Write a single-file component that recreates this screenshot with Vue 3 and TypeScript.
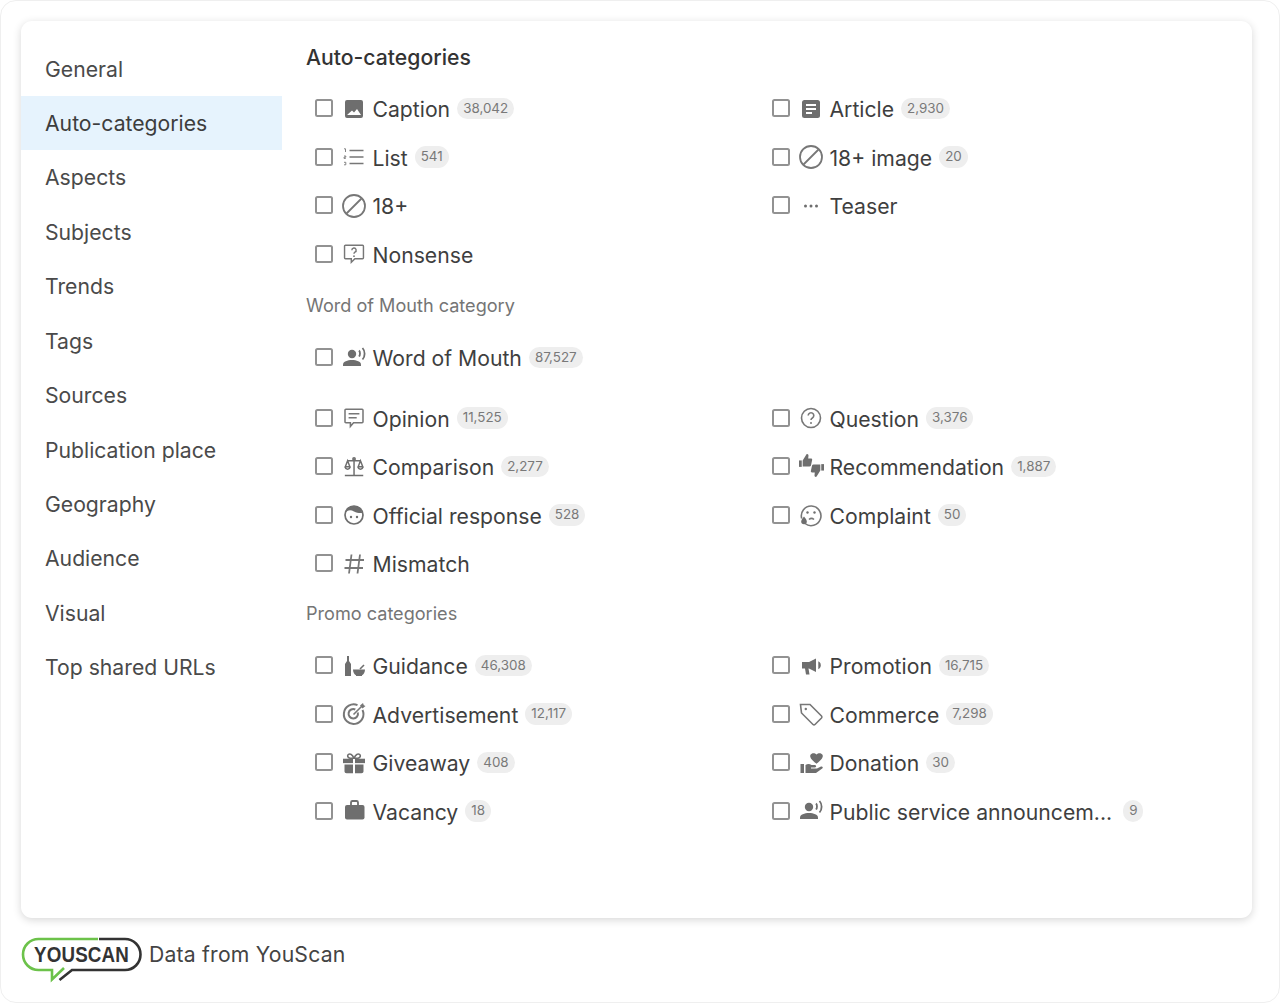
<script setup lang="ts">
interface Row {
  label: string
  count?: string
  icon: string
}

const menu: string[] = [
  'General', 'Auto-categories', 'Aspects', 'Subjects', 'Trends', 'Tags',
  'Sources', 'Publication place', 'Geography', 'Audience', 'Visual', 'Top shared URLs',
]

const autoRows: Row[] = [
  { label: 'Caption', count: '38,042', icon: 'image' },
  { label: 'Article', count: '2,930', icon: 'article' },
  { label: 'List', count: '541', icon: 'list' },
  { label: '18+ image', count: '20', icon: 'ban' },
  { label: '18+', icon: 'ban' },
  { label: 'Teaser', icon: 'dots' },
  { label: 'Nonsense', icon: 'nonsense' },
]

const womTop: Row[] = [{ label: 'Word of Mouth', count: '87,527', icon: 'speaker' }]

const womRows: Row[] = [
  { label: 'Opinion', count: '11,525', icon: 'opinion' },
  { label: 'Question', count: '3,376', icon: 'question' },
  { label: 'Comparison', count: '2,277', icon: 'scale' },
  { label: 'Recommendation', count: '1,887', icon: 'thumbs' },
  { label: 'Official response', count: '528', icon: 'official' },
  { label: 'Complaint', count: '50', icon: 'complaint' },
  { label: 'Mismatch', icon: 'hash' },
]

const promoRows: Row[] = [
  { label: 'Guidance', count: '46,308', icon: 'guidance' },
  { label: 'Promotion', count: '16,715', icon: 'megaphone' },
  { label: 'Advertisement', count: '12,117', icon: 'target' },
  { label: 'Commerce', count: '7,298', icon: 'tag' },
  { label: 'Giveaway', count: '408', icon: 'gift' },
  { label: 'Donation', count: '30', icon: 'donation' },
  { label: 'Vacancy', count: '18', icon: 'case' },
  { label: 'Public service announcem...', count: '9', icon: 'speaker' },
]

const groups: { title?: string; rows: Row[]; kind?: string }[] = [
  { rows: autoRows },
  { title: 'Word of Mouth category', rows: womTop },
  { rows: womRows, kind: 'spaced' },
  { title: 'Promo categories', rows: promoRows, kind: 'pulled' },
]
</script>

<template>
  <div class="page">
    <div class="card">
      <nav class="side">
        <div v-for="(item, i) in menu" :key="item" class="side-item" :class="{ active: i === 1 }">{{ item }}</div>
      </nav>
      <main class="content">
        <h2 class="title">Auto-categories</h2>
        <section v-for="(g, gi) in groups" :key="gi" :class="g.kind">
          <div v-if="g.title" class="group-title">{{ g.title }}</div>
          <div class="grid">
            <div v-for="r in g.rows" :key="r.label" class="row">
              <span class="check"></span>
              <svg class="ico" viewBox="0 0 24 24" width="24" height="24">
                <g v-if="r.icon === 'image'" fill="#6e6e6e">
                  <path fill-rule="evenodd" d="M5 3h14a2 2 0 0 1 2 2v14a2 2 0 0 1-2 2H5a2 2 0 0 1-2-2V5a2 2 0 0 1 2-2zm0 15h14l-4-6-3 3.500-2-2z" />
                </g>
                <g v-else-if="r.icon === 'article'">
                  <rect x="3" y="3" width="18" height="18" rx="2.500" fill="#6e6e6e" />
                  <path d="M7 8h10M7 12h10M7 16h6" stroke="#fff" stroke-width="1.800" fill="none" />
                </g>
                <g v-else-if="r.icon === 'list'" stroke="#777" fill="none">
                  <path d="M7.500 5.500h14M7.500 12h14M7.500 18.500h14" stroke-width="1.500" />
                  <path d="M2 3.800h1.500v3.200M2 11h1.800v1.200H2v1.200h1.800M2 17.300h1.800v2.500H2" stroke-width=".9" />
                </g>
                <g v-else-if="r.icon === 'ban'" stroke="#777" stroke-width="1.800" fill="none">
                  <circle cx="12" cy="12" r="11" />
                  <path d="M4.500 19.500 19.500 4.500" />
                </g>
                <g v-else-if="r.icon === 'dots'" fill="#6e6e6e">
                  <circle cx="6.500" cy="12" r="1.500" /><circle cx="12" cy="12" r="1.500" /><circle cx="17.500" cy="12" r="1.500" />
                </g>
                <g v-else-if="r.icon === 'nonsense'" fill="none" stroke="#777" stroke-width="1.600" transform="translate(1.200 1) scale(.9)">
                  <path d="M2.500 2.500h19a1 1 0 0 1 1 1v13a1 1 0 0 1-1 1h-8.500l-4 4v-4h-6.500a1 1 0 0 1-1-1v-13a1 1 0 0 1 1-1z" />
                  <path d="M9.600 8a2.400 2.400 0 1 1 3.400 2.200c-.7.400-1 .800-1 1.800" />
                  <circle cx="12" cy="14.600" r="1" fill="#777" stroke="none" />
                </g>
                <g v-else-if="r.icon === 'speaker'" fill="#6e6e6e">
                  <circle cx="10" cy="8" r="4.200" />
                  <path d="M1 20v-1.500C1 15.500 5.500 14 10 14s9 1.500 9 4.500V20z" />
                  <path d="M17 4.500c1.300 1.300 1.300 4.500 0 6M20.500 2c2.800 3 2.800 8.500 0 11.500" fill="none" stroke="#6e6e6e" stroke-width="1.800" />
                </g>
                <g v-else-if="r.icon === 'opinion'" fill="none" stroke="#777" stroke-width="1.700" transform="translate(1.200 1) scale(.9)">
                  <path d="M3 2.500h18a1 1 0 0 1 1 1v13a1 1 0 0 1-1 1h-9.500L8 21.500v-4H3a1 1 0 0 1-1-1v-13a1 1 0 0 1 1-1z" />
                  <path d="M6 7.500h12M6 12h9" />
                </g>
                <g v-else-if="r.icon === 'question'" fill="none" stroke="#777" stroke-width="1.600">
                  <circle cx="12" cy="12" r="9.500" />
                  <path d="M9.200 9.500a2.800 2.800 0 1 1 4.200 2.500c-.9.500-1.400 1-1.400 2" />
                  <circle cx="12" cy="17" r="1" fill="#777" stroke="none" />
                </g>
                <g v-else-if="r.icon === 'scale'" fill="none" stroke="#6e6e6e" stroke-width="1.600" transform="translate(1 .8) scale(.92)">
                  <path d="M12 3v18M2 21.500h20M5 5.500h14M5 5.500 2.500 12h5zM19 5.500 16.500 12h5z" />
                  <path d="M2.500 12a2.500 2.500 0 0 0 5 0M16.500 12a2.500 2.500 0 0 0 5 0" />
                  <circle cx="12" cy="3.500" r="1.300" />
                </g>
                <g v-else-if="r.icon === 'thumbs'" fill="#6e6e6e" transform="translate(0 -1)">
                  <g transform="scale(.92)">
                    <rect x="0" y="7" width="3" height="7" />
                    <path d="M4 7 8 .500c1-1 2.500 0 2.300 1.500L10 5h3c1 0 1.500.700 1.300 1.500L13 12.500c-.200.800-.800 1.200-1.600 1.200H4z" />
                  </g>
                  <g transform="rotate(180 12.500 11.500) scale(.92)">
                    <rect x="0" y="7" width="3" height="7" />
                    <path d="M4 7 8 .500c1-1 2.500 0 2.300 1.500L10 5h3c1 0 1.500.700 1.300 1.500L13 12.500c-.200.800-.800 1.200-1.600 1.200H4z" />
                  </g>
                </g>
                <g v-else-if="r.icon === 'official'" fill="none" stroke="#6e6e6e" stroke-width="1.700">
                  <circle cx="12" cy="12" r="9" />
                  <path d="M3.500 10C6 6.500 9 7 12 8.500c2.500 1.300 5.500 1.800 8.500 1.500L18 4.500 12 3 6 4.500z" fill="#6e6e6e" stroke="none" />
                  <circle cx="9" cy="14" r="1.200" fill="#6e6e6e" stroke="none" />
                  <circle cx="15" cy="14" r="1.200" fill="#6e6e6e" stroke="none" />
                </g>
                <g v-else-if="r.icon === 'complaint'" fill="none" stroke="#777" stroke-width="1.600">
                  <path d="M6 20.500a9.800 9.800 0 1 0-3.300-5" />
                  <circle cx="8.500" cy="9.500" r="1.200" fill="#6e6e6e" stroke="none" />
                  <circle cx="15.500" cy="9.500" r="1.200" fill="#6e6e6e" stroke="none" />
                  <path d="M10 16.500c1.500-1.300 3.500-1.300 5 0" />
                  <path d="M5 13.500c1.800 2.300 2.800 3.600 2.800 5a2.800 2.800 0 0 1-5.600 0c0-1.400 1-2.700 2.800-5z" fill="#6e6e6e" stroke="none" />
                </g>
                <g v-else-if="r.icon === 'hash'" fill="none" stroke="#777" stroke-width="1.800">
                  <path d="M9.500 2.500 7 21.500M18 2.500l-2.500 19M3.500 8H22M2.500 16H21" />
                </g>
                <g v-else-if="r.icon === 'guidance'" fill="#6e6e6e">
                  <path d="M5 2h2v5l2 3v12H3V10l2-3z" />
                  <path d="M11 15.500h12c0 3-1.500 5-3 5.800v.7h-6v-.7c-1.500-.8-3-2.800-3-5.800z" />
                  <path d="m18 15 4-4" stroke="#6e6e6e" stroke-width="1.600" />
                </g>
                <g v-else-if="r.icon === 'target'" fill="none" stroke="#777" stroke-width="2">
                  <path d="M20.500 8a9.800 9.800 0 1 1-5-4.800" />
                  <path d="M15.800 10.500a4.700 4.700 0 1 1-2.500-3" />
                  <path d="M11.500 12.500 21 3" stroke-width="1.600" />
                  <path d="m18 3.500 3-2.500.8 2.300 1.700.7-3 2.500z" fill="#777" stroke="none" />
                </g>
                <g v-else-if="r.icon === 'gift'" fill="#6e6e6e" transform="translate(0 2) scale(1 .88)">
                  <rect x="1" y="6.500" width="10" height="5" />
                  <rect x="13" y="6.500" width="10" height="5" />
                  <path d="M2.500 13H11v10H4.500a2 2 0 0 1-2-2zM13 13h8.500v8a2 2 0 0 1-2 2H13z" />
                  <path d="M12 6C10 1 8 .500 6.500 1.500 5 2.500 5.500 5.500 8 6zM12 6c2-5 4-5.500 5.500-4.500 1.500 1 1 4-1.500 4.500z" fill="none" stroke="#6e6e6e" stroke-width="1.600" />
                </g>
                <g v-else-if="r.icon === 'case'" fill="#6e6e6e">
                  <rect x="3" y="6" width="19.500" height="14.500" rx="2" />
                  <path d="M9 7V3.500A1.500 1.500 0 0 1 10.500 2h4A1.500 1.500 0 0 1 16 3.500V7" fill="none" stroke="#6e6e6e" stroke-width="1.800" />
                </g>
                <g v-else-if="r.icon === 'megaphone'" fill="#6e6e6e">
                  <path d="M3 8h7l7-3.500v13.500l-7-3.500H9.500l1 6H7l-1-6H3z" />
                  <path d="M20 8.500c1.500 1 1.500 4.500 0 5.500z" stroke="#6e6e6e" stroke-width="1.400" />
                </g>
                <g v-else-if="r.icon === 'tag'" fill="none" stroke="#777" stroke-width="1.600">
                  <path d="M1.500 2.500h9.500l11.500 11.500a1.500 1.500 0 0 1 0 2L16 22.500a1.500 1.500 0 0 1-2 0L2.500 11z" />
                  <circle cx="6.800" cy="7" r="1.200" fill="#777" stroke="none" />
                </g>
                <g v-else-if="r.icon === 'donation'" fill="#6e6e6e">
                  <rect x="1.500" y="13" width="3.500" height="9" />
                  <path d="M6.500 14c2-1.500 4-1.500 6 0h3.500c1.500 0 1.500 2.500 0 2.500h-4v1h6l4-2c1.500-.5 2.500 1 1.200 2L17 22H6.500z" />
                  <path d="M17.500 3.500c1.800-2 5-1.700 6 .3 1 2-.3 4.700-6 9-5.700-4.300-7-7-6-9 1-2 4.200-2.300 6-.3z" />
                </g>
              </svg>
              <span class="label">{{ r.label }}</span>
              <span v-if="r.count" class="badge" :class="{ far: r.label.endsWith('...') }">{{ r.count }}</span>
            </div>
          </div>
        </section>
      </main>
    </div>
    <footer class="foot">
      <svg class="logo" viewBox="0 0 120 45" width="120" height="45">
        <path d="M77 2H17.500a15.500 15.500 0 0 0 0 31H31v9.500L43 31" fill="none" stroke="#6cc24a" stroke-width="2.600" />
        <path d="M78 2h26a15.500 15.500 0 0 1 0 31H51L38.500 43" fill="none" stroke="#333" stroke-width="2.600" />
        <text x="13" y="25" class="logo-text" textLength="95" lengthAdjust="spacingAndGlyphs">YOUSCAN</text>
      </svg>
      <span>Data from YouScan</span>
    </footer>
  </div>
</template>

<style scoped>
.page {
  box-sizing: border-box;
  height: 1003px;
  padding: 20px 27px 0 20px;
  border: 1px solid #efefef;
  border-radius: 16px;
  background: #fff;
  font-family: Inter, "Liberation Sans", sans-serif;
  color: #333;
  overflow: hidden;
}

.card {
  display: flex;
  height: 897px;
  background: #fff;
  border-radius: 11px;
  box-shadow: 0 2px 8px rgba(0, 0, 0, 0.16);
}

.side {
  width: 261px;
  flex-shrink: 0;
  padding-top: 20.500px;
}

.side-item {
  height: 54.450px;
  line-height: 54.500px;
  padding-left: 24px;
  font-size: 21.200px;
  color: #4a4a4a;
}

.side-item.active {
  background: #e6f3fd;
  color: #3d3d3d;
}

.content {
  flex: 1;
  padding: 20px 0 0 24px;
}

.title {
  margin: 0 0 11.900px;
  font-size: 21.200px;
  line-height: 32px;
  font-weight: 500;
  color: #333;
}

.spaced {
  margin-top: 12px;
}

.pulled {
  margin-top: -1.500px;
}

.group-title {
  height: 55px;
  line-height: 53px;
  font-size: 18.100px;
  color: #757575;
}

.grid {
  display: grid;
  grid-template-columns: 457px 1fr;
}

.row {
  display: flex;
  align-items: center;
  height: 48.500px;
  padding-left: 9px;
  font-size: 21.200px;
  color: #3f3f3f;
}

.check {
  box-sizing: border-box;
  width: 18px;
  height: 18px;
  margin-top: -2px;
  border: 2px solid #929292;
  border-radius: 2.500px;
  flex-shrink: 0;
}

.ico {
  margin: -1px 6.500px 0 9px;
  flex-shrink: 0;
  overflow: visible;
}

.label {
  white-space: nowrap;
}

.badge {
  margin-left: 7px;
  padding: 0 6px;
  height: 21.500px;
  line-height: 21.500px;
  border-radius: 11px;
  background: #eeeeee;
  color: #797979;
  font-size: 13.400px;
  text-align: center;
  margin-top: -1px;
}

.badge.far {
  margin-left: 11px;
}

.foot {
  display: flex;
  align-items: flex-start;
  gap: 8px;
  margin-top: 19px;
  font-size: 21.200px;
  color: #444;
  letter-spacing: 0.2px;
}

.foot span {
  margin-top: 2px;
  line-height: 30px;
}

.logo {
  overflow: visible;
}

.logo-text {
  font-family: "Liberation Sans Narrow", "Liberation Sans", sans-serif;
  font-weight: 700;
  font-size: 22.300px;
  fill: #333;
}
</style>

<style>
html, body {
  margin: 0;
  background: #fff;
}
</style>
